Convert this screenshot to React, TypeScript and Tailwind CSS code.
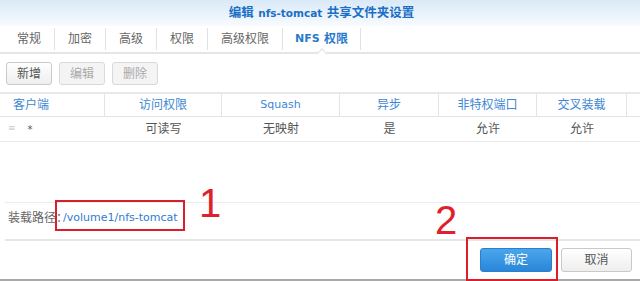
import React from 'react';

const font = { fontFamily: '"DejaVu Sans", "Noto Sans CJK SC", sans-serif' };

const tabs = ['常规', '加密', '高级', '权限', '高级权限'];

const cols = [
    { label: '客户端', w: 'w-[105px]', align: 'justify-start pl-[13px]' },
    { label: '访问权限', w: 'w-[117px]', align: 'justify-center' },
    { label: 'Squash', w: 'w-[118px]', align: 'justify-center text-[11px]' },
    { label: '异步', w: 'w-[99px]', align: 'justify-center' },
    { label: '非特权端口', w: 'w-[98px]', align: 'justify-center' },
    { label: '交叉装载', w: 'w-[90px]', align: 'justify-center' },
];

const row = ['*', '可读写', '无映射', '是', '允许', '允许'];

const App: React.FC = () => {
    return (
        <div className="w-[640px] h-[281px] bg-white overflow-hidden relative flex flex-col text-[12px] text-[#555]" style={font}>
            {/* title bar */}
            <div className="h-[26px] shrink-0 flex items-center justify-center bg-gradient-to-b from-[#d9e9f7] to-[#f8fbfe]">
                <span className="text-[12.5px] font-bold text-[#1b6fc6] ml-[3px]">
                    编辑 <span className="text-[10.5px]">nfs-tomcat</span> 共享文件夹设置
                </span>
            </div>

            {/* tabs */}
            <div className="h-[28px] shrink-0 flex items-center pl-[4px] border-b-2 border-[#e6e6e6] relative">
                {tabs.map((t) => (
                    <div key={t} className="h-[22px] flex items-center px-[13px] border-r border-[#e2e2e2] text-[#666]">
                        {t}
                    </div>
                ))}
                <div className="h-[22px] flex items-center px-[12px] border-r border-[#e2e2e2] font-bold text-[#2a7acb] relative">
                    <span className="text-[11px]">NFS</span>&nbsp;权限
                    <div className="absolute left-1/2 -translate-x-1/2 top-[22px] w-[8px] h-[8px] bg-white border-l border-t border-[#e2e2e2] rotate-45"></div>
                </div>
            </div>

            {/* toolbar */}
            <div className="flex gap-[7px] px-[6px] pt-[8px] pb-[7px] shrink-0">
                <button className="w-[46px] h-[23px] rounded-[3px] border border-[#c9c9c9] bg-gradient-to-b from-white to-[#eeeeee] text-[#555]">新增</button>
                <button className="w-[46px] h-[23px] rounded-[3px] border border-[#d9d9d9] bg-[#f4f4f4] text-[#aaa]">编辑</button>
                <button className="w-[46px] h-[23px] rounded-[3px] border border-[#d9d9d9] bg-[#f4f4f4] text-[#aaa]">删除</button>
            </div>

            {/* table */}
            <div className="border-t-2 border-[#e8e8e8] shrink-0">
                <div className="flex h-[23px] border-b border-[#e4e4e4] text-[#3d87d4]">
                    {cols.map((c) => (
                        <div key={c.label} className={`${c.w} flex items-center ${c.align} border-r border-[#e4e4e4]`}>
                            {c.label}
                        </div>
                    ))}
                    <div className="flex-1"></div>
                </div>
                <div className="flex h-[25px] border-b border-[#e8e8e8] text-[#555]">
                    <div className="w-[105px] flex items-center pl-[8px] gap-[12px]">
                        <span className="text-[#ccc] text-[9px]">≡</span>
                        <span className="text-[10px]">*</span>
                    </div>
                    {row.slice(1).map((v, i) => (
                        <div key={i} className={`${cols[i + 1].w} flex items-center justify-center`}>{v}</div>
                    ))}
                </div>
            </div>

            <div className="flex-1"></div>

            {/* mount path */}
            <div className="h-[39px] shrink-0 border-t border-[#ececec] border-b-2 border-b-[#e6e6e6] ml-[5px] flex items-start pt-[6px] pl-[3px]">
                <span className="text-[#666]">装载路径：</span>
                <span className="text-[#2e7cd0] text-[11px] ml-[-5px] mt-[1px]">/volume1/nfs-tomcat</span>
            </div>

            {/* footer buttons */}
            <div className="h-[40px] shrink-0 flex items-center justify-end gap-[9px] pr-[8px] border-b-2 border-[#a9a9a9]">
                <button className="w-[72px] h-[24px] rounded-[3px] bg-gradient-to-b from-[#4aa6ec] to-[#2a86d8] border border-[#2b7fcc] text-white">确定</button>
                <button className="w-[71px] h-[24px] rounded-[3px] border border-[#c9c9c9] bg-gradient-to-b from-white to-[#eeeeee] text-[#555]">取消</button>
            </div>

            {/* annotations */}
            <div className="absolute left-[55px] top-[200px] w-[130px] h-[31px] border-2 border-[#d9202a]"></div>
            <div className="absolute left-[199px] top-[183px] text-[40px] leading-none text-[#e0202a]" style={{ fontFamily: '"Liberation Sans", sans-serif' }}>1</div>
            <div className="absolute left-[466px] top-[237px] w-[92px] h-[44px] border-2 border-[#d9202a]"></div>
            <div className="absolute left-[435px] top-[200px] text-[40px] leading-none text-[#e0202a]" style={{ fontFamily: '"Liberation Sans", sans-serif' }}>2</div>
        </div>
    );
};

export default App;
